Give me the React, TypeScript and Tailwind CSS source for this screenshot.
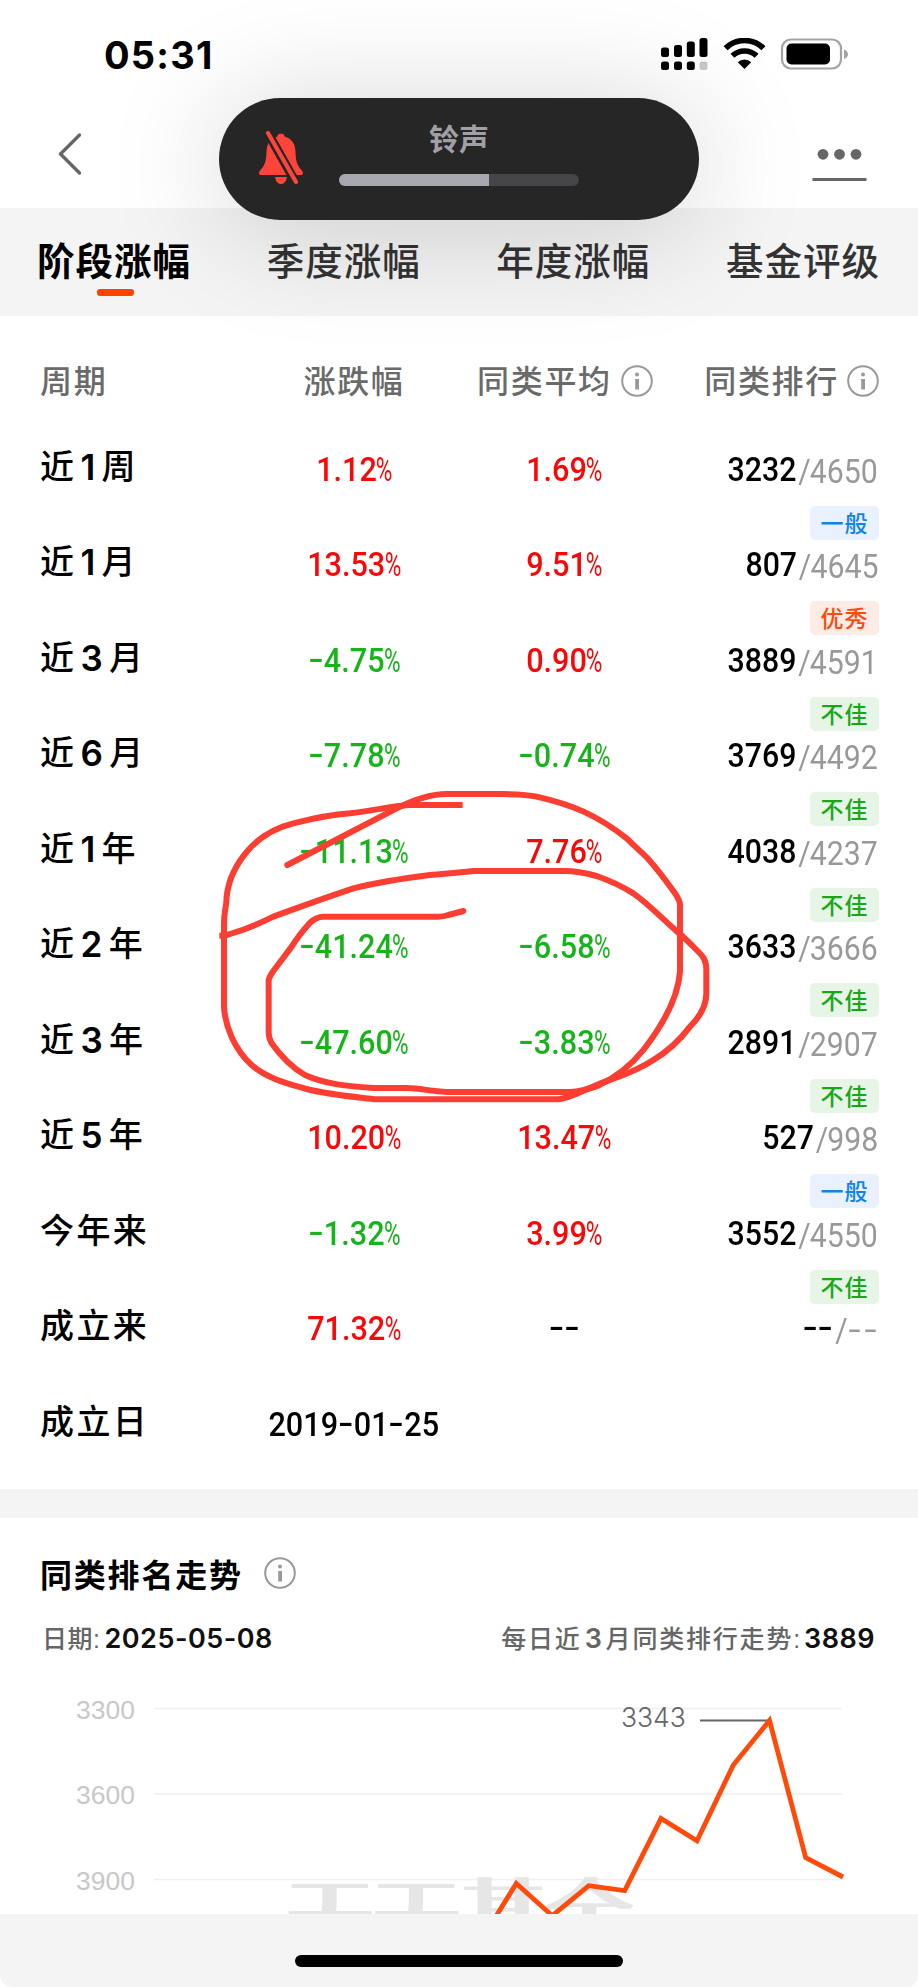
import React from "react";

type Tone = "up" | "down" | "plain";
type Tag = "一般" | "优秀" | "不佳";

interface Row {
  label: string[];
  change: string;
  average?: string;
  rank?: [string, string];
  tag?: Tag;
}

const rows: Row[] = [
  { label: ["近", "1", "周"], change: "1.12%", average: "1.69%", rank: ["3232", "4650"], tag: "一般" },
  { label: ["近", "1", "月"], change: "13.53%", average: "9.51%", rank: ["807", "4645"], tag: "优秀" },
  { label: ["近", "3", "月"], change: "-4.75%", average: "0.90%", rank: ["3889", "4591"], tag: "不佳" },
  { label: ["近", "6", "月"], change: "-7.78%", average: "-0.74%", rank: ["3769", "4492"], tag: "不佳" },
  { label: ["近", "1", "年"], change: "-11.13%", average: "7.76%", rank: ["4038", "4237"], tag: "不佳" },
  { label: ["近", "2", "年"], change: "-41.24%", average: "-6.58%", rank: ["3633", "3666"], tag: "不佳" },
  { label: ["近", "3", "年"], change: "-47.60%", average: "-3.83%", rank: ["2891", "2907"], tag: "不佳" },
  { label: ["近", "5", "年"], change: "10.20%", average: "13.47%", rank: ["527", "998"], tag: "一般" },
  { label: ["今年来"], change: "-1.32%", average: "3.99%", rank: ["3552", "4550"], tag: "不佳" },
  { label: ["成立来"], change: "71.32%", average: "--", rank: ["--", "--"] },
  { label: ["成立日"], change: "2019-01-25" },
];

const toneClass: Record<Tone, string> = {
  up: "text-[#f80808]",
  down: "text-[#17b31a]",
  plain: "text-black",
};

const tagClass: Record<Tag, string> = {
  一般: "bg-[#e8f1fd] text-[#1183f0]",
  优秀: "bg-[#fdebe5] text-[#fb4a0c]",
  不佳: "bg-[#e6f5e6] text-[#17a81a]",
};

function toneOf(value: string): Tone {
  if (!value.endsWith("%")) return "plain";
  return value.startsWith("-") ? "down" : "up";
}

/* Condensed figures: wide hyphens and a slim percent sign. */
function Figures({ text }: { text: string }) {
  return (
    <>
      {text.split(/(-|%)/).map((part, i) => {
        if (part === "-")
          return (
            <span key={i} className="inline-flex w-[17.5px] justify-center">
              <span className="inline-block -translate-y-px scale-x-[1.45]">-</span>
            </span>
          );
        if (part === "%")
          return (
            <span key={i} className="inline-flex w-[17px] justify-center">
              <span className="inline-block scale-x-[0.74] font-normal">%</span>
            </span>
          );
        return <span key={i}>{part}</span>;
      })}
    </>
  );
}

function InfoIcon() {
  return (
    <svg viewBox="0 0 32 32" className="h-8 w-8 shrink-0 -translate-y-px" fill="none">
      <circle cx="16" cy="16" r="14.8" stroke="#999" strokeWidth="2" />
      <circle cx="16" cy="9.6" r="2" fill="#999" />
      <path d="M13.2 14h4.8v10.4h-3.8V14.2z" fill="#999" />
    </svg>
  );
}

function StatusBar() {
  return (
    <div className="flex h-[98px] items-start pl-[104px] pr-[70px]">
      <div className="mt-[32px] font-['Inter'] text-[38px] font-bold leading-[46px] tracking-[1.2px]">05:31</div>
      <svg viewBox="0 0 190 34" className="ml-auto mt-[38px] h-[34px] w-[190px]">
        <g>
          <rect x="3" y="9.5" width="8" height="9.5" rx="2.5" />
          <rect x="16" y="7" width="8" height="12" rx="2.5" />
          <rect x="28.8" y="3.5" width="8" height="15.5" rx="2.5" />
          <rect x="41.5" y="0" width="8" height="19" rx="2.5" />
          <rect x="3" y="23.5" width="8" height="8.5" rx="2.5" />
          <rect x="16" y="23.5" width="8" height="8.5" rx="2.5" />
          <rect x="28.8" y="23.5" width="8" height="8.5" rx="2.5" />
          <rect x="41.5" y="23.5" width="8" height="8.5" rx="2.5" fill="#c9c9c9" />
        </g>
        <g fill="none" stroke="#000" strokeWidth="5.6">
          <path d="M67.6 10.2a27 27 0 0 1 37.8 0" />
          <path d="M74.4 17.8a17.5 17.5 0 0 1 24.2 0" />
        </g>
        <path d="M79.8 24.3a9.5 9.5 0 0 1 13.4 0L86.5 31z" />
        <rect x="124" y="1.5" width="59" height="29" rx="9" fill="none" stroke="#a3a3a3" strokeWidth="2.2" />
        <rect x="128.500" y="5.5" width="43.500" height="21" rx="5" />
        <path d="M186 11.5q4 1.5 4 4.8t-4 4.8z" fill="#a3a3a3" />
      </svg>
    </div>
  );
}

function VolumeIsland() {
  return (
    <div className="absolute left-[219px] top-[98px] z-20 flex h-[122px] w-[480px] rounded-[61px] bg-[#262626] shadow-[0_8px_120px_rgba(0,0,0,0.18)]">
      <svg viewBox="0 0 44 54" className="ml-10 mt-[33px] h-[54px] w-11 shrink-0">
        <path
          d="M22 2.5c-2 0-3.4 1.3-3.6 3C11.500 7.500 8 12.500 7.600 19.500c-.4 9-.8 13.500-5.200 18.500C.8 39.800 0 41 0 42.200c0 1.200.8 1.800 2 1.800h40c1.200 0 2-.6 2-1.800 0-1.200-.8-2.400-2.400-4.200-4.400-5-4.800-9.500-5.200-18.500-.4-7-3.900-12-10.800-14-.2-1.700-1.600-3-3.600-3zM16 46h12c-.8 4.500-3 7-6 7s-5.200-2.500-6-7z"
          fill="#ff453a"
        />
        <path d="M9 2l28 50" stroke="#262626" strokeWidth="9" />
        <path d="M9 2l28 49" stroke="#ff453a" strokeWidth="4.2" strokeLinecap="round" />
      </svg>
      <div className="ml-9 flex w-[240px] flex-col items-center">
        <div className="mt-[21px] text-[30px] font-bold leading-[42px] text-[#a0a0a5]">铃声</div>
        <div className="mt-[13px] h-3 w-full overflow-hidden rounded-full bg-[#454547]">
          <div className="h-full w-[150px] bg-[#a7a7af]" />
        </div>
      </div>
    </div>
  );
}

function NavBar() {
  return (
    <div className="flex h-[110px] items-start justify-between pl-[57px] pr-[51px]">
      <svg viewBox="0 0 24 42" className="mt-[35px] h-[42px] w-6" fill="none">
        <path d="M22.500 2L3.500 21l19 19" stroke="#666" strokeWidth="3.400" strokeLinecap="round" strokeLinejoin="round" />
      </svg>
      <svg viewBox="0 0 55 36" className="mt-[50px] h-9 w-[55px]" fill="#666">
        <circle cx="11" cy="6.300" r="5.400" />
        <circle cx="27.500" cy="6.300" r="5.400" />
        <circle cx="44" cy="6.300" r="5.400" />
        <rect x="0.500" y="30" width="54" height="3" />
      </svg>
    </div>
  );
}

const tabs = ["阶段涨幅", "季度涨幅", "年度涨幅", "基金评级"];

function Tabs() {
  return (
    <div className="flex h-[108px] justify-between bg-[#f4f4f4] pl-[37px] pr-[38px] pt-[28px]">
      {tabs.map((tab, i) => (
        <div key={tab} className="flex w-[154px] flex-col items-center">
          <div
            className={
              i === 0
                ? "whitespace-nowrap text-[37.500px] font-bold leading-[52px] tracking-[1px] text-black"
                : "whitespace-nowrap text-[37.500px] font-medium leading-[52px] tracking-[1px] text-[#333]"
            }
          >
            {tab}
          </div>
          {i === 0 && <div className="ml-[2px] mt-px h-[7px] w-[37px] rounded-[3px] bg-[#ff4400]" />}
        </div>
      ))}
    </div>
  );
}

function PeriodTable() {
  return (
    <div className="relative h-[1173px] overflow-hidden bg-white pl-10 pr-[39px] pt-[42px]">
      <div className="flex h-12 items-center text-[32px] font-medium leading-[48px] tracking-[1.7px] text-[#6a6a6a]">
        <div className="w-[199px]">周期</div>
        <div className="flex w-[230px] justify-center">涨跌幅</div>
        <div className="flex w-[183px] grow items-center gap-[9px] pl-[8px]">
          同类平均
          <InfoIcon />
        </div>
        <div className="flex items-center gap-[8px]">
          同类排行
          <InfoIcon />
        </div>
      </div>
      <div className="pt-[22px]">
        {rows.map((row) => (
          <div key={row.label.join("")} className="flex h-[95.47px] items-start">
            <div className="flex w-[199px] pt-[14px] text-[34px] font-medium leading-[50px] tracking-[2.4px]">
              {row.label.map((part, i) =>
                /\d/.test(part) ? (
                  <span key={i} className="ml-[4px] mr-[4px] font-['Inter'] text-[35px] font-semibold">
                    {part}
                  </span>
                ) : (
                  <span key={i}>{part}</span>
                ),
              )}
            </div>
            <div className="flex w-[230px] justify-center pt-[17px] font-['Roboto'] text-[34px] font-medium leading-[48px]">
              <div className={`origin-center scale-x-90 whitespace-nowrap ${toneClass[toneOf(row.change)]}`}>
                <Figures text={row.change} />
              </div>
            </div>
            <div className="flex w-[190px] justify-center pt-[17px] font-['Roboto'] text-[34px] font-medium leading-[48px]">
              {row.average && (
                <div className={`origin-center scale-x-90 whitespace-nowrap ${toneClass[toneOf(row.average)]}`}>
                  <Figures text={row.average} />
                </div>
              )}
            </div>
            <div className="flex grow flex-col items-end pt-[17px]">
              {row.rank && (
                <div className="mr-px flex origin-right scale-x-[0.89] whitespace-nowrap font-['Roboto'] text-[34px] font-medium leading-[48px]">
                  <span className="text-black">
                    <Figures text={row.rank[0]} />
                  </span>
                  <span className="flex pl-[2px] pt-[2px] font-[450] text-[#999]">
                    <span className="-mr-px">/</span>
                    <span>
                      <Figures text={row.rank[1]} />
                    </span>
                  </span>
                </div>
              )}
              {row.tag && (
                <div
                  className={`mt-[11px] h-[34px] w-[69px] shrink-0 rounded-[5px] text-center text-[23px] font-medium leading-[36px] tracking-[1px] ${tagClass[row.tag]}`}
                >
                  {row.tag}
                </div>
              )}
            </div>
          </div>
        ))}
      </div>
    </div>
  );
}

function TrendChart() {
  return (
    <svg
      viewBox="0 1670 918 244"
      className="block h-[244px] w-[918px]"
      fontFamily="'Liberation Sans', sans-serif"
    >
      <defs>
        <filter id="thick-stems" x="-5%" y="-5%" width="110%" height="110%">
          <feMorphology operator="dilate" radius="5 0" />
        </filter>
      </defs>
      <g stroke="#efefef" strokeWidth="1.500">
        <path d="M154 1708.500H842M154 1794H842M154 1879.500H842" />
      </g>
      <text
        x="288"
        y="1948"
        fontFamily="'Noto Sans CJK SC', sans-serif"
        fontSize="84"
        fontWeight="300"
        fill="#e6e6e6"
        letterSpacing="2.500"
        filter="url(#thick-stems)"
      >
        天天基金
      </text>
      <g fontSize="26.500" fill="#c8c8c8">
        <text x="76" y="1718.500">3300</text>
        <text x="76" y="1804">3600</text>
        <text x="76" y="1889.500">3900</text>
      </g>
      <text x="621" y="1727" fontFamily="'Inter', sans-serif" fontSize="26.500" fontWeight="300" fill="#666">
        3343
      </text>
      <path d="M700 1720.500H768" stroke="#666" strokeWidth="2" />
      <polyline
        points="490,1926 516.300,1883.500 552.300,1915.700 588.700,1885.700 624.700,1890.700 661,1818.500 697,1840.700 733.300,1765 769.500,1720.500 805.700,1857.700 843,1877"
        fill="none"
        stroke="#ff4a0a"
        strokeWidth="4.800"
      />
    </svg>
  );
}

function RankTrend() {
  return (
    <div className="flex h-[396px] flex-col bg-white">
      <div className="flex h-[60px] items-center gap-[21px] pl-10 pt-[52px]">
        <div className="pt-[3px] text-[32px] font-bold leading-[48px] tracking-[1.800px]">同类排名走势</div>
        <InfoIcon />
      </div>
      <div className="mt-[41px] flex h-10 items-center justify-between pl-[42px] pr-[43px] text-[25px] leading-10 text-[#666]">
        <div className="flex items-center font-medium">
          <span className="tracking-[0.500px]">日期:</span>
          <span className="ml-[4px] font-['Inter'] text-[27px] font-semibold tracking-[0.500px] text-[#111]">2025-05-08</span>
        </div>
        <div className="flex items-center font-medium tracking-[1.800px]">
          每日近
          <span className="ml-[3px] mr-[2px] font-['Inter'] text-[27px] font-semibold">3</span>
          月同类排行走势:
          <span className="ml-[2px] font-['Inter'] text-[27px] font-semibold tracking-[0.500px] text-[#111]">3889</span>
        </div>
      </div>
      <div className="mt-auto">
        <TrendChart />
      </div>
    </div>
  );
}

/* Freehand marker strokes laid over the table. */
function MarkerStrokes() {
  return (
    <svg
      viewBox="0 0 1560 1080"
      className="pointer-events-none absolute left-[200px] top-[760px] z-10 h-[360px] w-[520px]"
      fill="none"
      stroke="#fc3d32"
      strokeWidth="18"
      strokeLinejoin="round"
    >
      <path d="M788 135H630C590 136 520 152 450 160C390 164 340 175 280 190C220 205 180 230 145 270C110 310 85 360 80 410C80 440 72 450 72 490V740C75 800 105 870 155 915C200 955 260 970 320 987C390 1005 460 1010 530 1018H1075C1110 1015 1140 995 1190 975C1250 950 1300 940 1360 900C1410 870 1440 840 1470 800C1500 770 1519 740 1519 700V630C1519 600 1510 590 1490 570C1470 550 1450 530 1435 518C1390 480 1350 435 1300 400C1260 375 1210 355 1190 348C1160 340 1130 333 1095 333H820C780 337 740 342 690 345C610 355 540 365 460 385C380 412 300 440 220 470C170 495 130 510 90 522C80 526 70 527 58 527" />
      <path
        strokeLinecap="round"
        d="M262 315L590 145C640 120 690 102 740 102H900C960 103 980 103 1010 110C1120 135 1190 165 1280 235C1300 255 1320 272 1340 292C1370 325 1400 365 1425 400Q1440 422 1440 435V635C1435 700 1400 780 1330 870C1290 920 1240 955 1195 977C1160 990 1140 996 1110 996H740C690 993 660 985 620 984H520C430 978 370 970 315 945C270 920 240 885 215 850Q206 835 206 820V660Q208 650 220 633L275 560C290 535 310 510 330 488Q350 470 370 470H715Q730 470 745 465L790 453"
      />
    </svg>
  );
}

export default function App() {
  return (
    <div className="relative h-[1987px] w-[918px] overflow-hidden bg-white font-['Liberation_Sans','Noto_Sans_CJK_SC',sans-serif] text-black">
      <StatusBar />
      <NavBar />
      <Tabs />
      <PeriodTable />
      <div className="h-[29px] bg-[#f4f4f4]" />
      <RankTrend />
      <div className="flex h-[73px] justify-center rounded-b-[12px] bg-[#f4f4f4] pt-[41px]">
        <div className="h-3 w-[328px] rounded-full bg-black" />
      </div>
      <VolumeIsland />
      <MarkerStrokes />
    </div>
  );
}
